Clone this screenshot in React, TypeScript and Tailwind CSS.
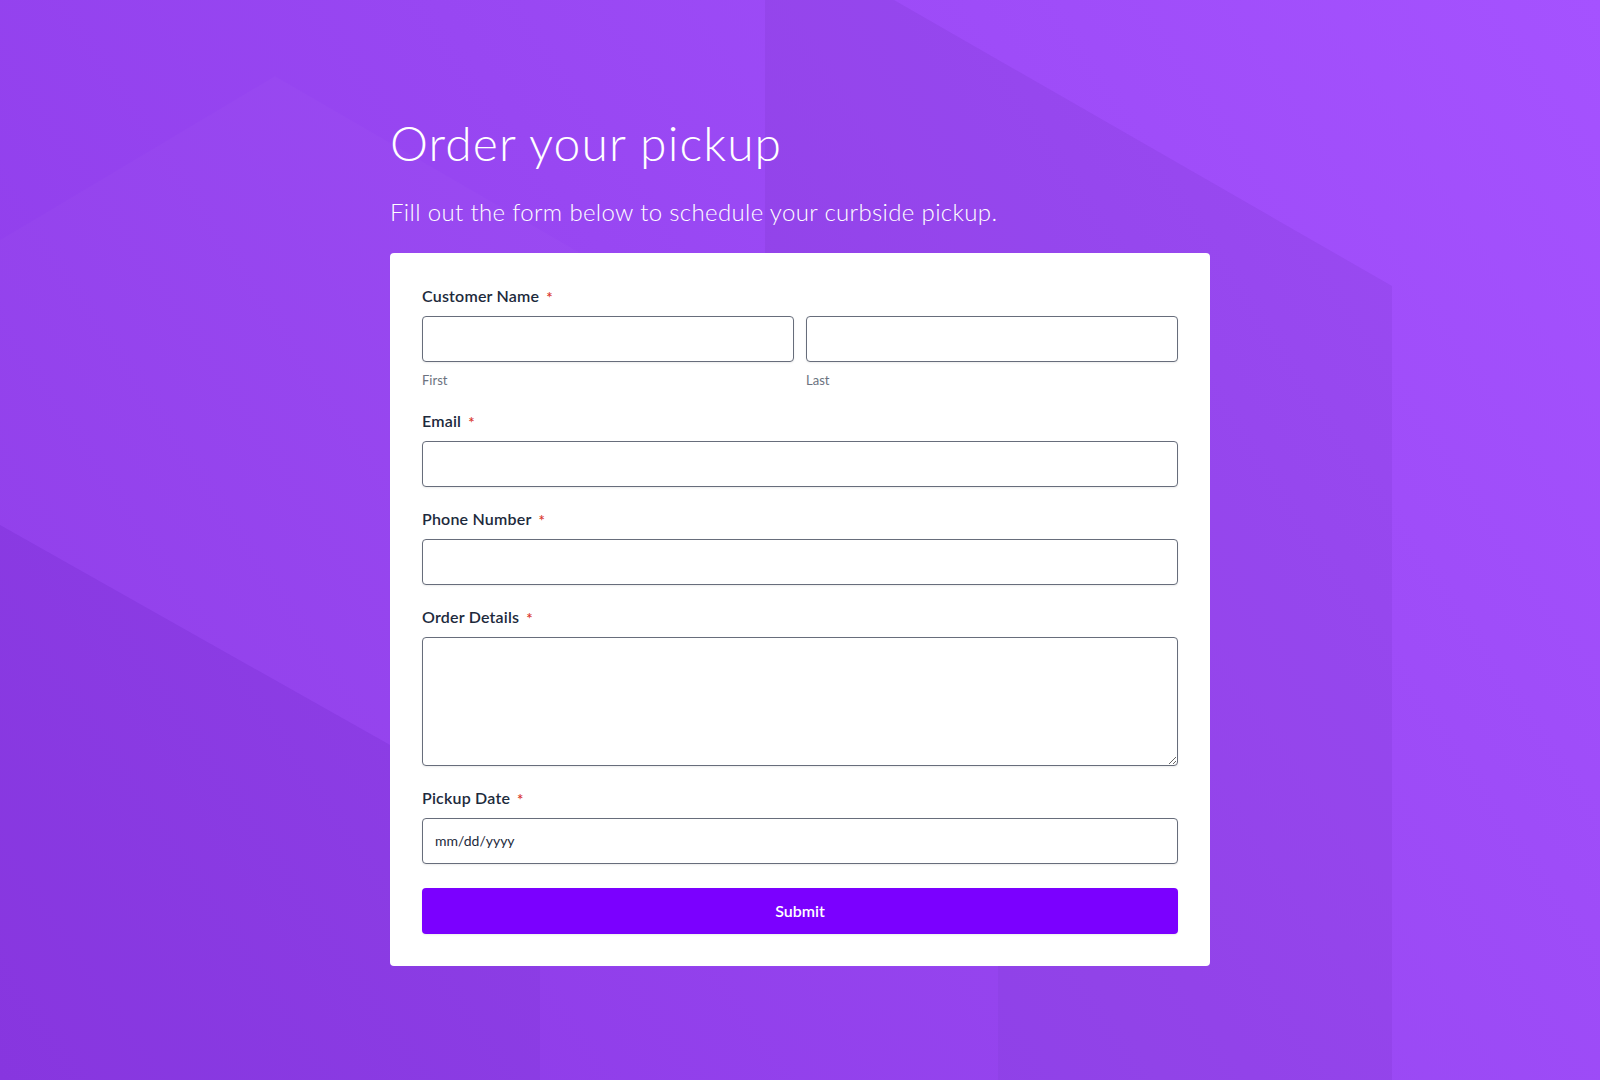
import type { ReactNode } from "react";

function Label({ children }: { children: ReactNode }) {
  return (
    <label className="flex h-6 items-center text-[16px] font-semibold leading-6 tracking-[0.2px] text-[#1d2a3c]">
      {children}
      <span className="ml-[7px] mt-[3px] text-[15px] leading-none text-[#d9352b]">*</span>
    </label>
  );
}

const inputClass =
  "block h-[46px] w-full rounded-[4px] border border-[#676d7b] bg-white px-3 text-[14px] text-[#1d2a3c] shadow-[0_1px_2px_rgba(0,0,0,0.08)] outline-none";

function Background() {
  return (
    <svg
      className="absolute inset-0 h-full w-full"
      viewBox="0 0 1600 1080"
      preserveAspectRatio="none"
      aria-hidden="true"
    >
      <defs>
        <linearGradient id="bg" x1="0" y1="1080" x2="1600" y2="0" gradientUnits="userSpaceOnUse">
          <stop offset="0" stopColor="#8d3ae8" />
          <stop offset="0.5" stopColor="#9847f2" />
          <stop offset="1" stopColor="#a552ff" />
        </linearGradient>
      </defs>
      <rect width="1600" height="1080" fill="url(#bg)" />
      {/* darker column on the right */}
      <polygon
        points="765,0 894,0 1392,286 1392,1080 998,1080 998,600 765,600"
        fill="#3b0a6e"
        fillOpacity="0.07"
      />
      {/* faint light wedge top-left */}
      <polygon points="0,240 275,76 765,360 765,600 390,745 0,525" fill="#ffffff" fillOpacity="0.018" />
      {/* bottom-left shadow */}
      <polygon points="0,525 390,745 540,830 540,1080 0,1080" fill="#3b0a6e" fillOpacity="0.07" />
      {/* lighter stripe below card */}
      <polygon points="540,967 998,967 998,1080 540,1080" fill="#3b0a6e" fillOpacity="0.02" />
    </svg>
  );
}

export default function App() {
  return (
    <div className="relative min-h-screen overflow-hidden font-['Lato','Liberation_Sans',sans-serif]">
      <Background />
      <main className="relative mx-auto w-[820px] pt-[114px] pb-[113px]">
        <h1 className="text-[48px] font-light leading-[1.2] tracking-[1.1px] text-white">
          Order your pickup
        </h1>
        <p className="mt-[22px] text-[24px] font-light leading-[36px] tracking-[0.35px] text-white">
          Fill out the form below to schedule your curbside pickup.
        </p>

        <form
          className="mt-[23px] rounded-[4px] bg-white px-8 pt-[31px] pb-8"
          onSubmit={(event) => event.preventDefault()}
        >
          <Label>Customer Name</Label>
          <div className="mt-2 grid grid-cols-2 gap-3">
            <div>
              <input className={inputClass} />
              <p className="mt-2 text-[13px] leading-5 text-[#6b7280]">First</p>
            </div>
            <div>
              <input className={inputClass} />
              <p className="mt-2 text-[13px] leading-5 text-[#6b7280]">Last</p>
            </div>
          </div>

          <div className="mt-[19px]">
            <Label>Email</Label>
            <input type="email" className={`${inputClass} mt-2`} />
          </div>

          <div className="mt-5">
            <Label>Phone Number</Label>
            <input type="tel" className={`${inputClass} mt-2`} />
          </div>

          <div className="mt-5">
            <Label>Order Details</Label>
            <textarea className="mt-2 block h-[129px] w-full rounded-[4px] border border-[#676d7b] bg-white px-3 py-2 text-[14px] text-[#1d2a3c] shadow-[0_1px_2px_rgba(0,0,0,0.08)] outline-none" />
          </div>

          <div className="mt-5">
            <Label>Pickup Date</Label>
            <input
              placeholder="mm/dd/yyyy"
              className={`${inputClass} mt-2 placeholder:text-[#1d2a3c]`}
            />
          </div>

          <button
            type="submit"
            className="mt-6 block h-[46px] w-full rounded-[4px] bg-[#7b00ff] text-[16px] font-semibold text-white shadow-[0_1px_2px_rgba(0,0,0,0.08)]"
          >
            Submit
          </button>
        </form>
      </main>
    </div>
  );
}
